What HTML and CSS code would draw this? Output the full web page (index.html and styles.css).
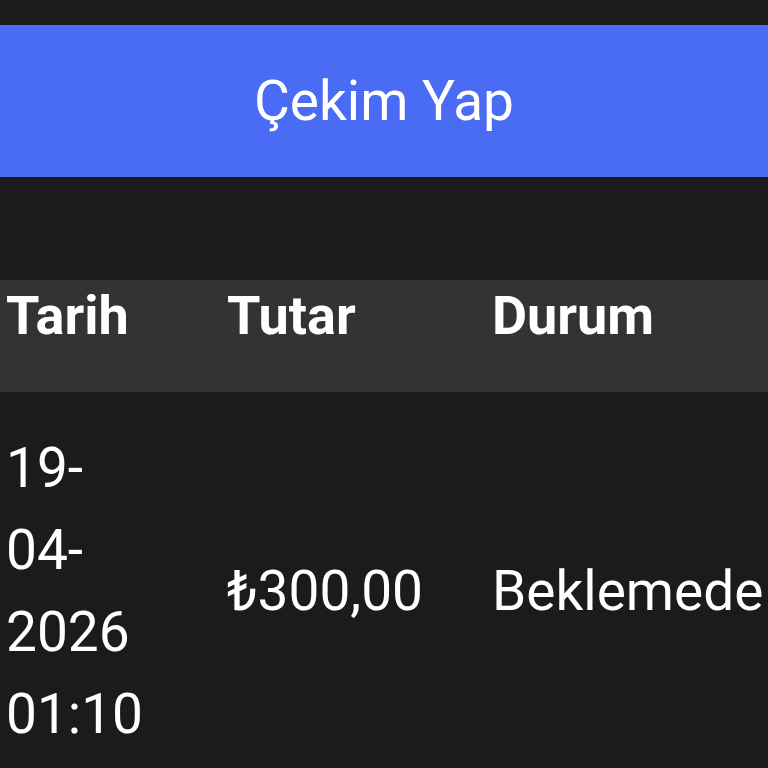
FILE: index.html
```html
<!DOCTYPE html>
<html lang="tr">
<head>
<meta charset="utf-8">
<title>Çekim Yap</title>
<link rel="stylesheet" href="styles.css">
</head>
<body>
<div class="page">
  <button class="withdraw">Çekim Yap</button>
  <table class="history">
    <thead>
      <tr>
        <th class="c-date">Tarih</th>
        <th class="c-amount">Tutar</th>
        <th class="c-status">Durum</th>
      </tr>
    </thead>
    <tbody>
      <tr>
        <td class="c-date">19-04-2026 01:10</td>
        <td class="c-amount">₺300,00</td>
        <td class="c-status">Beklemede</td>
      </tr>
    </tbody>
  </table>
</div>
</body>
</html>
```
FILE: styles.css
```css
html, body {
  margin: 0;
  padding: 0;
  background: #1b1b1b;
  color: #ffffff;
  font-family: Roboto, "Liberation Sans", sans-serif;
}

.page {
  width: 768px;
  height: 768px;
  overflow: hidden;
  padding-top: 25px;
  box-sizing: border-box;
}

.withdraw {
  display: block;
  width: 100%;
  height: 152px;
  margin: 0;
  border: none;
  background: #4a6cf4;
  color: #ffffff;
  font-family: Roboto, "Liberation Sans", sans-serif;
  font-size: 55px;
  font-weight: 400;
  padding: 0;
}

.history {
  margin-top: 103px;
  width: 768px;
  border-collapse: collapse;
  table-layout: fixed;
}

.history th {
  background: #333333;
  text-align: left;
  vertical-align: top;
  font-size: 54px;
  font-weight: 700;
  line-height: normal;
  padding: 4px 0 45px 6px;
}

.history td {
  font-size: 55px;
  line-height: 82px;
  vertical-align: middle;
  padding: 35px 0 40px 6px;
}

.history th.c-date {
  width: 215px;
}

.history td.c-date {
  padding-right: 70px;
  width: 145px;
}

.history th.c-amount {
  width: 259px;
}
```
